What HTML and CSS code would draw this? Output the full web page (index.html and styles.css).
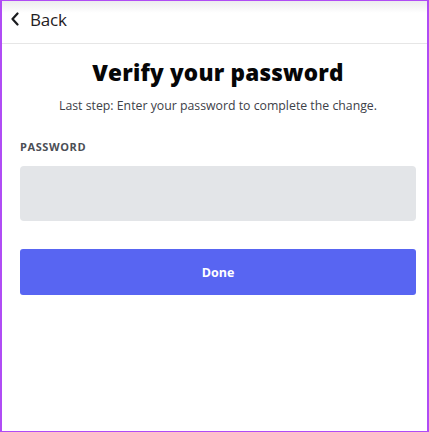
FILE: index.html
```html
<!DOCTYPE html>
<html>
<head>
<meta charset="utf-8">
<link rel="stylesheet" href="styles.css">
</head>
<body>
<div class="frame">
  <header class="topbar">
    <span class="back-icon">
      <svg width="10" height="14" viewBox="0 0 10 14"><path d="M7.5 1.5 L2.5 7 L7.5 12.5" fill="none" stroke="#1a1b1e" stroke-width="2.2" stroke-linecap="round" stroke-linejoin="round"/></svg>
    </span>
    <span class="back-label">Back</span>
  </header>
  <main class="content">
    <h1 class="title">Verify your password</h1>
    <p class="subtitle">Last step: Enter your password to complete the change.</p>
    <label class="field-label">PASSWORD</label>
    <div class="input"></div>
    <button class="done">Done</button>
  </main>
</div>
</body>
</html>
```
FILE: styles.css
```css
* { box-sizing: border-box; }
html, body { margin: 0; padding: 0; background: #fff; }
.frame {
  width: 429px;
  height: 432px;
  border-left: 2px solid #b04cf5;
  border-right: 2px solid #b04cf5;
  border-bottom: 1px solid #b04cf5;
  border-top: 1px solid #b04cf5;
  background: #fff;
  font-family: "Open Sans", "Noto Sans", sans-serif;
}
.topbar {
  height: 43px;
  display: flex;
  align-items: center;
  padding-left: 8px;
  padding-bottom: 6px;
  gap: 10px;
  border-bottom: 1px solid #e6e6e6;
  background: linear-gradient(#ececee 0px, #ffffff 12px);
}
.back-icon { display: flex; width: 10px; height: 14px; }
.back-label {
  font-size: 17px;
  letter-spacing: -0.2px;
  color: #1f2023;
  font-family: "Open Sans", sans-serif;
}
.content {
  padding: 0 11px 0 18px;
  display: flex;
  flex-direction: column;
}
.title {
  margin: 14px 0 0;
  text-align: center;
  font-family: "Open Sans", sans-serif;
  font-weight: 800;
  font-size: 22.5px;
  line-height: 30px;
  color: #060607;
  letter-spacing: 0.2px;
}
.subtitle {
  margin: 10px 0 0;
  text-align: center;
  font-size: 12.3px;
  line-height: 16px;
  color: #3d4148;
}
.field-label {
  margin-top: 27px;
  font-size: 11px;
  font-weight: 700;
  letter-spacing: 0.6px;
  color: #4b4e55;
  line-height: 12px;
}
.input {
  margin-top: 13px;
  height: 55px;
  background: #e3e5e8;
  border-radius: 4px;
}
.done {
  margin-top: 28px;
  height: 46px;
  background: #5865f2;
  border: 0;
  border-radius: 3px;
  color: #fff;
  font-family: "Open Sans", sans-serif;
  font-weight: 700;
  font-size: 12.5px;
}
```
